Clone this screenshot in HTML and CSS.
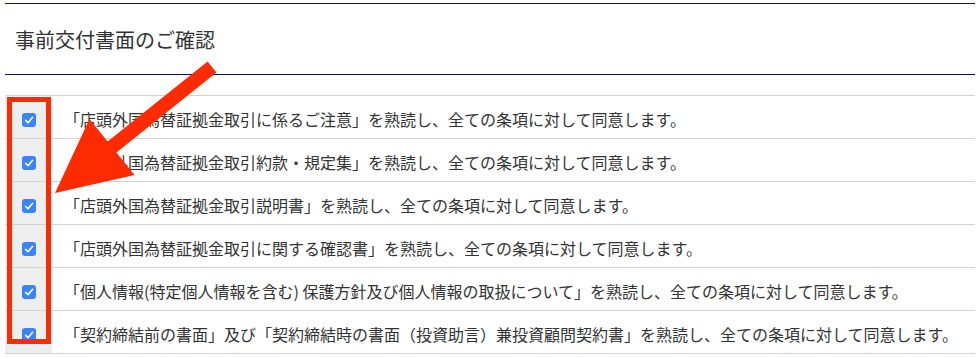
FILE: index.html
```html
<!DOCTYPE html>
<html lang="ja">
<head>
<meta charset="utf-8">
<title>事前交付書面のご確認</title>
<link rel="stylesheet" href="styles.css">
</head>
<body>
<div class="page">
  <section class="confirm">
    <h2 class="confirm-title">事前交付書面のご確認</h2>
    <ul class="agree-list">
      <li class="agree-row">
        <span class="check-cell"><span class="checkbox"><svg viewBox="0 0 14 14"><path d="M3.6 7.4 L6 9.8 L10.6 4.3"/></svg></span></span>
        <span class="text-cell">「店頭外国為替証拠金取引に係るご注意」を熟読し、全ての条項に対して同意します。</span>
      </li>
      <li class="agree-row">
        <span class="check-cell"><span class="checkbox"><svg viewBox="0 0 14 14"><path d="M3.6 7.4 L6 9.8 L10.6 4.3"/></svg></span></span>
        <span class="text-cell">「店頭外国為替証拠金取引約款・規定集」を熟読し、全ての条項に対して同意します。</span>
      </li>
      <li class="agree-row">
        <span class="check-cell"><span class="checkbox"><svg viewBox="0 0 14 14"><path d="M3.6 7.4 L6 9.8 L10.6 4.3"/></svg></span></span>
        <span class="text-cell">「店頭外国為替証拠金取引説明書」を熟読し、全ての条項に対して同意します。</span>
      </li>
      <li class="agree-row">
        <span class="check-cell"><span class="checkbox"><svg viewBox="0 0 14 14"><path d="M3.6 7.4 L6 9.8 L10.6 4.3"/></svg></span></span>
        <span class="text-cell">「店頭外国為替証拠金取引に関する確認書」を熟読し、全ての条項に対して同意します。</span>
      </li>
      <li class="agree-row">
        <span class="check-cell"><span class="checkbox"><svg viewBox="0 0 14 14"><path d="M3.6 7.4 L6 9.8 L10.6 4.3"/></svg></span></span>
        <span class="text-cell">「個人情報(特定個人情報を含む) 保護方針及び個人情報の取扱について」を熟読し、全ての条項に対して同意します。</span>
      </li>
      <li class="agree-row">
        <span class="check-cell"><span class="checkbox"><svg viewBox="0 0 14 14"><path d="M3.6 7.4 L6 9.8 L10.6 4.3"/></svg></span></span>
        <span class="text-cell">「契約締結前の書面」及び「契約締結時の書面（投資助言）兼投資顧問契約書」を熟読し、全ての条項に対して同意します。</span>
      </li>
    </ul>
  </section>
  <div class="annot-box"></div>
  <svg class="annot-arrow" viewBox="0 0 980 358" width="980" height="358">
    <polygon points="207.6,61.5 216.4,72.5 116.4,152.5 134.5,175 55,193 89.5,119 107.6,141.5"/>
  </svg>
</div>
</body>
</html>
```

FILE: styles.css
```css
html, body {
  margin: 0;
  padding: 0;
  background: #ffffff;
}

body {
  font-family: "Noto Sans CJK JP", "Noto Sans", sans-serif;
  color: #333333;
}

.page {
  position: relative;
  width: 980px;
  height: 358px;
  overflow: hidden;
}

.confirm {
  margin: 3px 5px 0;
  border-top: 1px solid #14144a;
}

.confirm-title {
  margin: 0;
  padding: 22px 0 20px 10px;
  font-size: 20px;
  line-height: 28px;
  font-weight: normal;
  color: #333333;
  border-bottom: 1px solid #14144a;
}

.agree-list {
  list-style: none;
  margin: 20px 0 0;
  padding: 0;
  border-top: 1px solid #d2d2d2;
}

.agree-row {
  display: grid;
  grid-template-columns: 47px 1fr;
  height: 42px;
  border-bottom: 1px solid #d2d2d2;
}

.check-cell {
  display: flex;
  align-items: center;
  justify-content: center;
  padding-top: 6px;
  background: #eeeeee;
}

.checkbox {
  display: block;
  width: 14px;
  height: 14px;
  border-radius: 3px;
  background: #3a84f7;
}

.checkbox svg {
  display: block;
  width: 14px;
  height: 14px;
}

.checkbox path {
  fill: none;
  stroke: #ffffff;
  stroke-width: 1.6;
  stroke-linecap: round;
  stroke-linejoin: round;
}

.text-cell {
  padding: 11px 0 7px 12px;
  font-size: 16px;
  line-height: 24px;
  white-space: nowrap;
  color: #333333;
}

.annot-box {
  position: absolute;
  left: 7px;
  top: 97px;
  width: 44px;
  height: 247px;
  box-sizing: border-box;
  border: 5px solid #fe2a00;
}

.annot-arrow {
  position: absolute;
  left: 0;
  top: 0;
  pointer-events: none;
}

.annot-arrow polygon {
  fill: #fe2a00;
}
```
